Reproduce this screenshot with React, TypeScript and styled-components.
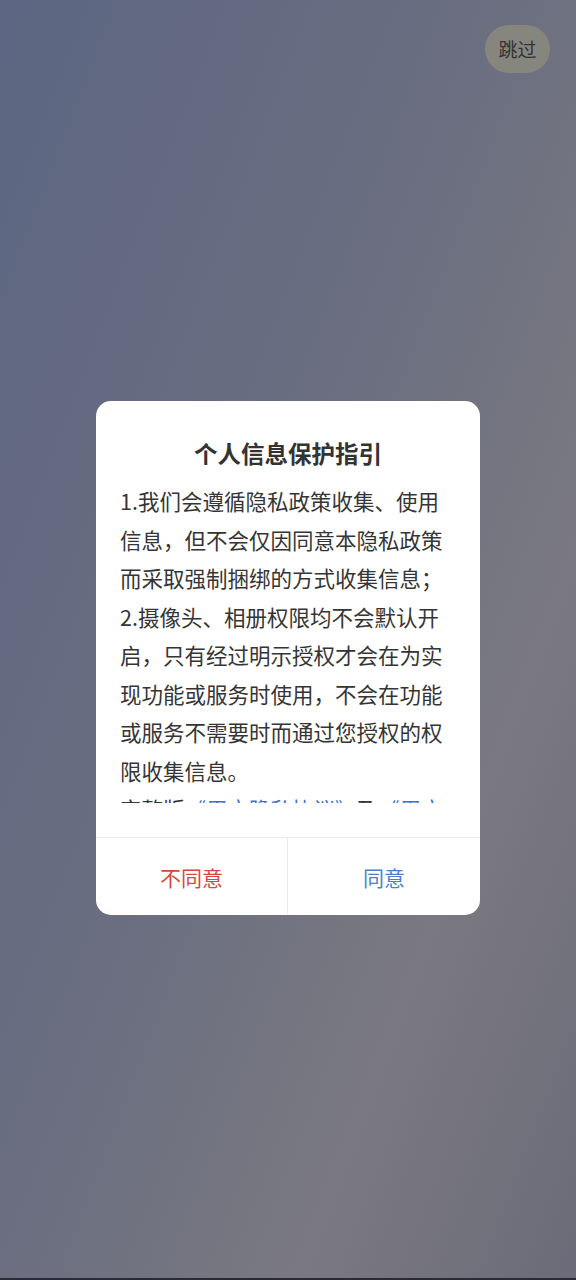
import React from "react";
import styled, { createGlobalStyle } from "styled-components";

const GlobalStyle = createGlobalStyle`
  html, body {
    margin: 0;
    padding: 0;
  }
  body {
    font-family: "Noto Sans CJK SC", "Noto Sans", sans-serif;
    -webkit-font-smoothing: antialiased;
  }
  * { box-sizing: border-box; }
`;

const Page = styled.div`
  width: 576px;
  min-height: 1280px;
  display: flex;
  flex-direction: column;
  background: linear-gradient(111deg, #5c6682 0%, #6a6e80 45%, #7a7981 74%, #6b6b79 100%);
  box-shadow: inset 0 -2px 0 #2a2a32;
`;

const TopBar = styled.div`
  display: flex;
  justify-content: flex-end;
  padding: 25px 26px 0 0;
`;

const SkipButton = styled.button`
  width: 65px;
  height: 48px;
  border: none;
  border-radius: 24px;
  background: #86867f;
  color: #333333;
  font-family: "Noto Sans CJK SC", sans-serif;
  font-size: 19px;
  line-height: 48px;
  padding: 0;
  cursor: pointer;
`;

const Dialog = styled.div`
  width: 384px;
  margin: 328px auto 0;
  background: #ffffff;
  border-radius: 15px;
  overflow: hidden;
  display: flex;
  flex-direction: column;
`;

const Title = styled.h2`
  margin: 0;
  padding-top: 36px;
  height: 68px;
  text-align: center;
  font-size: 23.5px;
  line-height: 32px;
  font-weight: 700;
  color: #333333;
`;

const Content = styled.div`
  margin-top: 13px;
  height: 321px;
  overflow: hidden;
  padding: 0 24px;
  font-size: 21.5px;
  line-height: 38.5px;
  color: #353535;
  word-break: break-all;
`;

const Paragraph = styled.p`
  margin: 0;
`;

const Link = styled.span`
  color: #3d6fd0;
`;

const Actions = styled.div`
  margin-top: 34px;
  display: grid;
  grid-template-columns: 1fr 1fr;
  border-top: 1px solid #ececec;
  height: 78px;
`;

const ActionButton = styled.button<{ $tone: "danger" | "primary"; $divider?: boolean }>`
  border: none;
  background: transparent;
  padding: 0;
  font-family: "Noto Sans CJK SC", sans-serif;
  font-size: 21px;
  color: ${(p) => (p.$tone === "danger" ? "#d9453f" : "#4a7fcf")};
  border-right: ${(p) => (p.$divider ? "1px solid #ececec" : "none")};
  cursor: pointer;
`;

export default function App() {
  return (
    <>
      <GlobalStyle />
      <Page>
        <TopBar>
          <SkipButton>跳过</SkipButton>
        </TopBar>
        <Dialog>
          <Title>个人信息保护指引</Title>
          <Content>
            <Paragraph>1.我们会遵循隐私政策收集、使用信息，但不会仅因同意本隐私政策而采取强制捆绑的方式收集信息；</Paragraph>
            <Paragraph>2.摄像头、相册权限均不会默认开启，只有经过明示授权才会在为实现功能或服务时使用，不会在功能或服务不需要时而通过您授权的权限收集信息。</Paragraph>
            <Paragraph>
              完整版<Link>《用户隐私协议》</Link>及<Link>《用户隐私政策》</Link>
            </Paragraph>
          </Content>
          <Actions>
            <ActionButton $tone="danger" $divider>不同意</ActionButton>
            <ActionButton $tone="primary">同意</ActionButton>
          </Actions>
        </Dialog>
      </Page>
    </>
  );
}
